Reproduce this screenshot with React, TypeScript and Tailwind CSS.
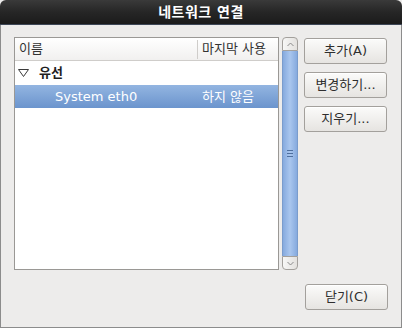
import React from "react";

const font = { fontFamily: '"DejaVu Sans", "Noto Sans CJK KR", sans-serif' };

const Button = ({ label }: { label: string }) => (
  <button className="h-[26px] w-[83px] rounded-[3px] border border-[#a3a09c] bg-gradient-to-b from-[#fbfbfa] to-[#e6e4e1] text-[13px] text-[#2e2e2e] shadow-[inset_0_1px_0_#ffffff]">
    {label}
  </button>
);

const App = () => {
  return (
    <div
      className="flex h-[328px] w-[402px] flex-col overflow-hidden bg-[#edeceb]"
      style={font}
    >
      {/* title bar */}
      <div className="flex h-[25px] items-center justify-center rounded-t-[6px] border-b border-[#3d4656] bg-gradient-to-b from-[#3a3a3a] via-[#262626] to-[#1b1b1b]">
        <span className="text-[14px] font-bold tracking-[0.5px] text-white">
          네트워크 연결
        </span>
      </div>

      <div className="flex flex-1 flex-col border-x border-b border-[#8c8c8c] px-[13px]">
        <div className="mt-[12px] flex">
          {/* tree list */}
          <div className="flex h-[233px] w-[265px] flex-col border border-[#9a9895] bg-white">
            <div className="flex h-[23px] items-center border-b border-[#cfcdca] bg-gradient-to-b from-[#ffffff] to-[#f1f0ef] text-[13px] text-[#333]">
              <div className="flex w-[182px] items-center pl-[4px]">이름</div>
              <div className="h-[19px] w-px bg-[#cfcdca]" />
              <div className="pl-[4px]">마지막 사용</div>
            </div>
            <div className="flex h-[24px] items-center text-[13px] text-[#1e1e1e]">
              <svg width="11" height="8" viewBox="0 0 11 8" className="ml-[3px]">
                <path d="M0.5 0.5 H10.5 L5.5 7.5 Z" fill="none" stroke="#3a3a3a" strokeWidth="1" />
              </svg>
              <span className="ml-[10px] font-bold">유선</span>
            </div>
            <div className="flex h-[23px] items-center bg-gradient-to-b from-[#93b5e1] to-[#6b94cd] text-[13px] text-white">
              <span className="w-[183px] pl-[40px]">System eth0</span>
              <span className="pl-[4px]">하지 않음</span>
            </div>
          </div>

          {/* scrollbar */}
          <div className="ml-[3px] flex h-[233px] w-[16px] flex-col">
            <div className="flex h-[14px] items-center justify-center rounded-t-[4px] border border-[#a3a09c] bg-gradient-to-r from-[#f7f7f6] to-[#e3e1de]">
              <svg width="7" height="5" viewBox="0 0 7 5">
                <path d="M0.5 4 L3.5 1 L6.5 4" fill="none" stroke="#8a8a8a" strokeWidth="1" />
              </svg>
            </div>
            <div className="flex flex-1 items-center justify-center border-x border-[#7a9ccc] bg-gradient-to-r from-[#86aade] via-[#a9c6ee] to-[#86aade]">
              <div className="flex flex-col gap-[2px]">
                <div className="h-px w-[6px] bg-[#4e6f9e]" />
                <div className="h-px w-[6px] bg-[#4e6f9e]" />
                <div className="h-px w-[6px] bg-[#4e6f9e]" />
              </div>
            </div>
            <div className="flex h-[14px] items-center justify-center rounded-b-[4px] border border-[#a3a09c] bg-gradient-to-r from-[#f7f7f6] to-[#e3e1de]">
              <svg width="7" height="5" viewBox="0 0 7 5">
                <path d="M0.5 1 L3.5 4 L6.5 1" fill="none" stroke="#8a8a8a" strokeWidth="1" />
              </svg>
            </div>
          </div>

          {/* action buttons */}
          <div className="ml-[6px] mt-[1px] flex flex-col gap-[8px]">
            <Button label="추가(A)" />
            <Button label="변경하기..." />
            <Button label="지우기..." />
          </div>
        </div>

        <div className="mt-[14px] flex justify-end pr-[0px]">
          <Button label="닫기(C)" />
        </div>
      </div>
    </div>
  );
};

export default App;
